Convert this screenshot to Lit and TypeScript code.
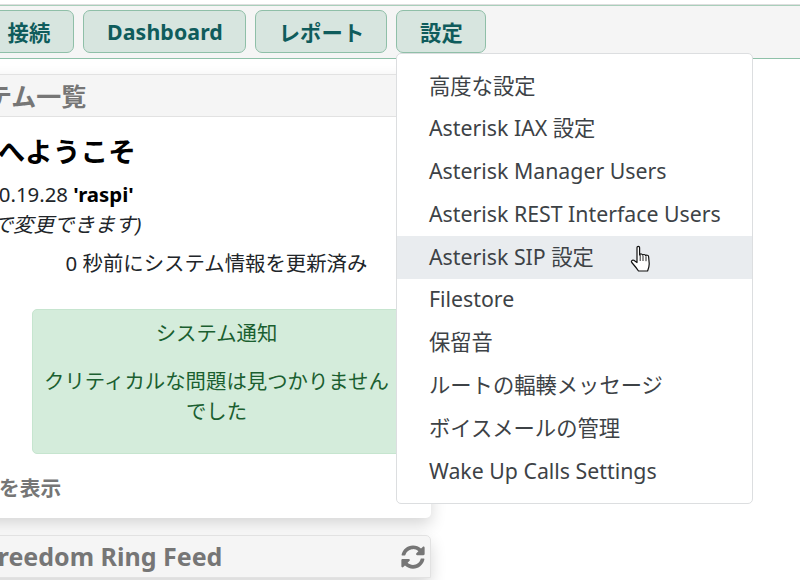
import { LitElement, html, css, svg } from "lit";
import { customElement } from "lit/decorators.js";

const ITEMS = [
  "高度な設定",
  "Asterisk IAX 設定",
  "Asterisk Manager Users",
  "Asterisk REST Interface Users",
  "Asterisk SIP 設定",
  "Filestore",
  "保留音",
  "ルートの輻輳メッセージ",
  "ボイスメールの管理",
  "Wake Up Calls Settings",
];

@customElement("app-root")
export class AppRoot extends LitElement {
  static styles = css`
    :host {
      display: block;
      width: 800px;
      height: 580px;
      overflow: hidden;
      position: relative;
      background: #fff;
      font-family: "Noto Sans", "Open Sans", "Noto Sans CJK JP", sans-serif;
      font-size: 20.4px;
      color: #212529;
    }
    .nav {
      margin-top: 5px;
      height: 54px;
      box-sizing: border-box;
      background: #f5f5f5;
      border-top: 1px solid #a9cfbb;
      border-bottom: 1px solid #8fc1a9;
      box-shadow: 0 -1px 0 #dedede;
      display: flex;
      gap: 9px;
      padding: 4px 0 0 0;
      margin-left: -17px;
    }
    .btn {
      height: 43px;
      box-sizing: border-box;
      display: flex;
      align-items: center;
      justify-content: center;
      padding-left: 1px;
      background: #d7e5df;
      border: 1px solid #8fbfa8;
      border-radius: 7px;
      color: #0f5c5c;
      font-weight: 700;
      font-size: 21.3px;
      letter-spacing: 0.1px;
    }
    .b1 { width: 91px; }
    .b2 { width: 163px; }
    .b3 { width: 132px; }
    .b4 { width: 90px; }
    .main {
      margin-left: -20px;
      width: 451px;
      padding-top: 15px;
      display: flex;
      flex-direction: column;
      gap: 17px;
    }
    .panel {
      background: #fff;
      border-radius: 5px;
      box-shadow: 0 7px 16px rgba(0, 0, 0, 0.16);
    }
    .first { height: 444px; }
    .head {
      height: 43px;
      box-sizing: border-box;
      background: #f5f5f5;
      border: 1px solid #e2e2e2;
      border-radius: 5px 5px 0 0;
      display: flex;
      align-items: center;
      justify-content: space-between;
      color: #767676;
      font-size: 25px;
      font-weight: 700;
      white-space: nowrap;
      padding: 0 5px 2px 0;
    }
    .h1 { margin-left: -44px; }
    .h2 { margin-left: 3px; }
    .icon { width: 24px; height: 24px; fill: #767676; display: block; margin-top: 2px; }
    .welcome {
      margin: 12px 0 0 -104px;
      font-size: 27.7px;
      font-weight: 700;
      line-height: 44px;
      color: #000;
      white-space: nowrap;
    }
    .ver {
      margin: 6px 0 0 -10px;
      line-height: 30px;
      color: #212529;
      white-space: nowrap;
    }
    .ver b { color: #000; }
    .hint {
      margin: 0 0 0 -34px;
      line-height: 30px;
      font-style: italic;
      white-space: nowrap;
    }
    .col {
      margin-left: 52px;
      width: 369px;
      display: flex;
      flex-direction: column;
      align-items: center;
    }
    .updated {
      margin-top: 9px;
      line-height: 30px;
      white-space: nowrap;
    }
    .alert {
      margin-top: 31px;
      width: 369px;
      height: 145px;
      box-sizing: border-box;
      background: #d4ecdb;
      border: 1px solid #c6e5cf;
      border-radius: 5px;
      color: #1b5f30;
      text-align: center;
      padding: 8px 5px 0;
      line-height: 30.5px;
    }
    .alert p { margin: 0 0 17px; }
    .more {
      margin: 19px 0 0 19px;
      color: #767676;
      font-size: 20.7px;
      font-weight: 700;
      line-height: 30px;
      white-space: nowrap;
    }
    .menu {
      position: absolute;
      left: 396px;
      top: 53px;
      width: 357px;
      height: 451px;
      box-sizing: border-box;
      background: #fff;
      border: 1px solid #dcdee0;
      border-radius: 5px;
      padding: 11px 0;
      display: flex;
      flex-direction: column;
      font-size: 21.3px;
    }
    .item {
      height: 42.8px;
      box-sizing: border-box;
      flex: none;
      padding: 5.5px 0 0 32px;
      line-height: 30px;
      color: #3d4246;
      white-space: nowrap;
    }
    .item.on { background: #e9ecef; }
    .cursor {
      position: absolute;
      left: 630px;
      top: 245px;
      width: 24px;
      height: 30px;
    }
  `;

  render() {
    return html`
      <div class="nav">
        <div class="btn b1">接続</div>
        <div class="btn b2">Dashboard</div>
        <div class="btn b3">レポート</div>
        <div class="btn b4">設定</div>
      </div>
      <div class="main">
        <section class="panel first">
          <div class="head"><span class="h1">システム一覧</span></div>
          <div class="welcome">FreePBX へようこそ</div>
          <div class="ver">16.0.19.28 <b>'raspi'</b></div>
          <div class="hint">(ここで変更できます)</div>
          <div class="col">
            <div class="updated">0 秒前にシステム情報を更新済み</div>
            <div class="alert">
              <p>システム通知</p>
              <p>クリティカルな問題は見つかりませんでした</p>
            </div>
          </div>
          <div class="more">を表示</div>
        </section>
        <section class="panel">
          <div class="head">
            <span class="h2">Freedom Ring Feed</span>
            <svg class="icon" viewBox="0 0 512 512">
              <path d="M370.72 133.28C339.458 104.008 298.888 87.962 255.848 88c-77.458.068-144.328 53.178-162.791 126.85-1.344 5.363-6.122 9.15-11.651 9.15H24.103c-7.498 0-13.194-6.807-11.807-14.176C33.933 94.924 134.813 8 256 8c66.448 0 126.791 26.136 171.315 68.685L463.03 40.97C478.149 25.851 504 36.559 504 57.941V192c0 13.255-10.745 24-24 24H345.941c-21.382 0-32.09-25.851-16.971-40.971l41.75-41.749zM32 296h134.059c21.382 0 32.09 25.851 16.971 40.971l-41.75 41.75c31.262 29.273 71.835 45.319 114.876 45.28 77.418-.07 144.315-53.144 162.787-126.849 1.344-5.363 6.122-9.15 11.651-9.15h57.304c7.498 0 13.194 6.807 11.807 14.176C478.067 417.076 377.187 504 256 504c-66.448 0-126.791-26.136-171.315-68.685L48.97 471.03C33.851 486.149 8 475.441 8 454.059V320c0-13.255 10.745-24 24-24z"/>
            </svg>
          </div>
        </section>
      </div>
      <div class="menu">
        ${ITEMS.map(
          (t, i) => html`<div class="item ${i === 4 ? "on" : ""}">${t}</div>`
        )}
      </div>
      <svg class="cursor" viewBox="0 0 24 30">
        ${svg`<path d="M7 2.500c0-1.600 2.600-1.600 2.600 0V10l.4-.6c.6-.7 2.200-.6 2.600.6.6-.8 2.600-.7 3 .5.8-.6 2.800-.4 3 1l.6 7c.1 3-.6 5-1.600 7.500H8.500C6.500 23 4 20 1.800 17.500c-1-1.300.5-3 2-2.200L7 17.500z" fill="#fff" stroke="#111" stroke-width="1.200" stroke-linejoin="round"/>
        <path d="M10.200 10v6M13 10.500v5.500M16 11.200v5" fill="none" stroke="#111" stroke-width="0.900"/>`}
      </svg>
    `;
  }
}
